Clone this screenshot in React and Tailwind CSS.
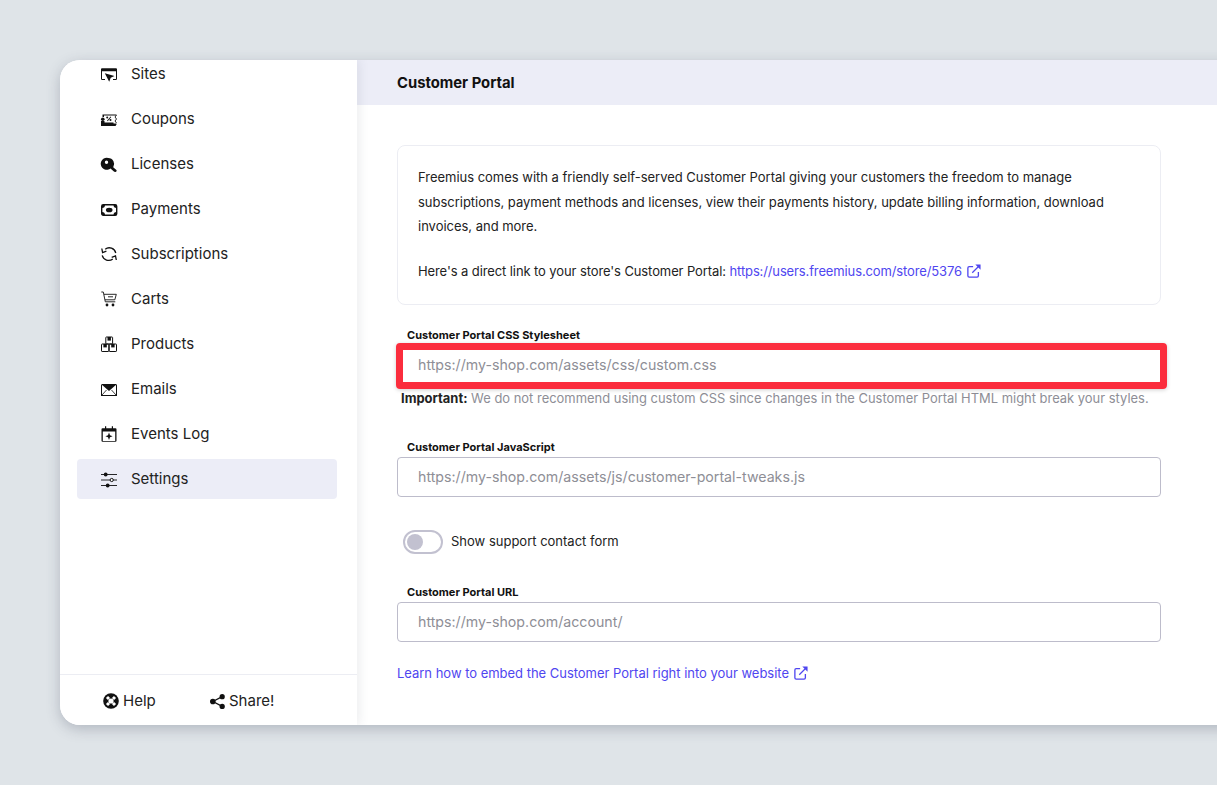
import React from "react";

const I = ({ children, vb = "0 0 16 16" }) => (
  <svg viewBox={vb} className="w-4 h-4 shrink-0 overflow-visible" fill="#111">{children}</svg>
);

const icons = {
  Sites: (
    <I>
      <path fillRule="evenodd" d="M1 2.300h14a1 1 0 0 1 1 1v9.500a1.200 1.200 0 0 1-1.200 1.200H12v-1h2.800a.2.200 0 0 0 .2-.2V5.200H1v7.600c0 .1.100.2.200.2H4v1H1.200A1.200 1.200 0 0 1 0 12.800V3.300a1 1 0 0 1 1-1z" />
      <path d="M3.800 7.300l9.700 2.800-3.800 1.700-1.500 3.900z" />
    </I>
  ),
  Coupons: (
    <I>
      <path d="M1.500 3.500h14v1H3v1.500H1.500zM0 11.500h12.500v1h3v1l-1 1.500H0z" />
      <circle cx="1.800" cy="8.300" r="1.800" />
      <path d="M0 10h3.500v2H0z" />
      <path d="M6 9.800l3.600-4.300.7.500-3.600 4.300zM6.200 5.500a1 1 0 1 1 0 2 1 1 0 0 1 0-2zM9.500 8a1 1 0 1 1 0 2 1 1 0 0 1 0-2z" />
      <path d="M15.500 4l-1.500 2 1.500 2-1.500 2 1.500 2" fill="none" stroke="#111" strokeWidth=".9" />
    </I>
  ),
  Licenses: (
    <I>
      <path fillRule="evenodd" d="M7.200 2a6 6 0 0 1 5 9.300l3.500 2.900-.6 1.800-1.900-.2-3.700-3.300A6 6 0 1 1 7.200 2zM5.500 4.600a1.700 1.700 0 1 0 0 3.400 1.700 1.700 0 0 0 0-3.400z" />
    </I>
  ),
  Payments: (
    <I>
      <rect x=".7" y="3.700" width="15" height="10.600" rx="1.500" fill="none" stroke="#111" strokeWidth="1.400" />
      <path d="M1 4h3a3 3 0 0 1-3 3zM15.500 4h-3a3 3 0 0 0 3 3zM1 14h3a3 3 0 0 0-3-3zM15.500 14h-3a3 3 0 0 1 3-3z" />
      <ellipse cx="8.200" cy="9" rx="3.300" ry="2.300" />
    </I>
  ),
  Subscriptions: (
    <I>
      <g fill="none" stroke="#111" strokeWidth="1.300">
        <path d="M14.800 7A6.700 6.700 0 0 0 4.200 3.200" />
        <path d="M1.200 9.300a6.700 6.700 0 0 0 10.600 3.700" />
        <path d="M.8 2.500l.8 4.200 3.800-1.500" />
        <path d="M15.300 14l-.8-4.200-3.800 1.500" />
      </g>
    </I>
  ),
  Carts: (
    <I>
      <g fill="none" stroke="#111" strokeWidth=".9">
        <path d="M.3 1h2l2 9.800h10" />
        <path d="M3 3.300h12.300l-1.500 5.500H4" />
        <path d="M7 5.800h5" />
      </g>
      <circle cx="6" cy="14" r="1.400" />
      <circle cx="12" cy="14" r="1.400" />
    </I>
  ),
  Products: (
    <I>
      <g fill="none" stroke="#111" strokeWidth="1">
        <rect x="4.800" y="1" width="6.800" height="7" rx=".6" />
        <rect x=".5" y="8" width="7.300" height="7.500" rx=".6" />
        <rect x="8.200" y="8" width="7.300" height="7.500" rx=".6" />
      </g>
      <rect x="6.500" y="1" width="3.400" height="3.600" />
      <rect x="2.400" y="8" width="3.400" height="3.400" />
      <rect x="10.200" y="8" width="3.400" height="3.400" />
    </I>
  ),
  Emails: (
    <I>
      <path d="M0 3h16L8 10z" />
      <path d="M0 3.500l1 .8v9.700h14V4.300l1-.8V15H0z" />
      <path d="M1 14l4.500-5M15 14l-4.500-5" stroke="#111" strokeWidth=".8" />
    </I>
  ),
  "Events Log": (
    <I>
      <path fillRule="evenodd" d="M4 .3h1.200v2h5.600v-2H12v2h2.500a1 1 0 0 1 1 1v11.400a1 1 0 0 1-1 1h-13a1 1 0 0 1-1-1V3.300a1 1 0 0 1 1-1H4zM1.800 5.500v9.500h12.400V5.500z" />
      <path d="M8 6.500l1 2.700 2.600 1-2.600 1-1 2.700-1-2.700-2.600-1 2.600-1z" />
    </I>
  ),
  Settings: (
    <I>
      <g stroke="#111" strokeWidth=".9" fill="none">
        <path d="M0 3.500h16M0 9h16M0 14.500h16" />
      </g>
      <circle cx="4.700" cy="3.500" r="1.900" />
      <circle cx="10.700" cy="9" r="1.600" fill="#fff" stroke="#111" />
      <circle cx="6.700" cy="14.500" r="1.900" />
    </I>
  ),
};

const items = ["Sites", "Coupons", "Licenses", "Payments", "Subscriptions", "Carts", "Products", "Emails", "Events Log", "Settings"];

const External = () => (
  <svg viewBox="0 0 16 16" className="w-[14px] h-[14px] inline-block" fill="none" stroke="#4f46f0" strokeWidth="1.500">
    <path d="M7 3H2.500A1.500 1.500 0 0 0 1 4.500v9A1.500 1.500 0 0 0 2.500 15h9a1.500 1.500 0 0 0 1.500-1.500V9" />
    <path d="M6 10L14 2" />
    <path d="M9.500 .5h6v6z" fill="#4f46f0" stroke="none" />
  </svg>
);

const Field = ({ label, placeholder, className = "" }) => (
  <div className={className}>
    <label className="block pl-[10px] text-[11px] leading-[14px] font-bold text-[#111] mb-[3px]">{label}</label>
    <input readOnly placeholder={placeholder} className="block w-[764px] h-10 rounded border border-[#bdbccb] bg-white pl-[20px] pb-[2px] text-[14.2px] outline-none placeholder:text-[#8e8e96]" />
  </div>
);

export default function App() {
  return (
    <div className="h-[785px] w-[1217px] overflow-hidden bg-[#dfe4e8] pt-[60px] pl-[60px] font-['Inter',sans-serif]">
      <div className="flex h-[665px] w-[1180px] overflow-hidden rounded-l-[20px] bg-white shadow-[0_4px_14px_rgba(60,70,90,0.28)]">
        <aside className="relative z-10 flex w-[297px] shrink-0 flex-col bg-white shadow-[2px_0_10px_rgba(60,70,90,0.1)]">
          <nav className="flex-1 overflow-hidden pl-[17px] pr-5">
            <ul className="-mt-[6px] flex flex-col gap-[5px]">
              {items.map((t) => (
                <li key={t} className={`flex h-10 items-center gap-[14px] rounded-sm pl-[24px] text-[15px] text-[#222] ${t === "Settings" ? "bg-[#ecedf7]" : ""}`}>
                  {icons[t]}
                  <span>{t}</span>
                </li>
              ))}
            </ul>
          </nav>
          <div className="flex h-[51px] items-center border-t border-[#ecedf3] pl-[43px] pt-[2px] text-[15px] text-[#222]">
            <span className="flex w-[107px] items-center gap-[4px]">
              <svg viewBox="0 0 16 16" className="h-4 w-4" fill="#111">
                <circle cx="8" cy="8" r="7.800" />
                <circle cx="8" cy="8" r="2.600" fill="#fff" />
                <path d="M4 4L6 6M12 4L10 6M4 12L6 10M12 12L10 10" stroke="#fff" strokeWidth="3" />
              </svg>
              Help
            </span>
            <span className="flex items-center gap-[4px]">
              <svg viewBox="0 0 16 16" className="h-[15px] w-[15px]" fill="#111">
                <circle cx="3" cy="8" r="3" />
                <circle cx="13" cy="2.800" r="2.800" />
                <circle cx="13" cy="13.200" r="2.800" />
                <path d="M3 8l10-5.200M3 8l10 5.200" stroke="#111" strokeWidth="1.400" />
              </svg>
              Share!
            </span>
          </div>
        </aside>
        <main className="min-w-0 flex-1">
          <header className="flex h-[45px] items-center bg-[#ecedf7] pl-10 pt-[2px] text-[14.8px] font-bold text-[#111]">Customer Portal</header>
          <div className="pl-10 pt-10">
            <section className="h-[160px] w-[764px] rounded-lg border border-[#ecedf3] px-5 pt-[19px] text-[13px] leading-[24.5px] text-[#222]">
              <p className="tracking-[-0.02px]">Freemius comes with a friendly self-served Customer Portal giving your customers the freedom to manage subscriptions, payment methods and licenses, view their payments history, update billing information, download invoices, and more.</p>
              <p className="mt-5 flex items-center">
                <span className="tracking-[-0.1px]">Here's a direct link to your store's Customer Portal:</span>&nbsp;
                <a className="text-[#4f46f0] tracking-[-0.13px]">https://users.freemius.com/store/5376</a>
                <span className="ml-[5px] flex"><External /></span>
              </p>
            </section>
            <div className="relative mt-[23px]">
              <Field label="Customer Portal CSS Stylesheet" placeholder="https://my-shop.com/assets/css/custom.css" />
              <div className="absolute left-[-1px] top-[15px] h-[46px] w-[771px] rounded-[4px] border-[7px] border-[#fb2d3d] shadow-[0_1px_4px_rgba(0,0,0,0.18)]" />
            </div>
            <p className="mt-[5px] pl-1 text-[12.95px] leading-4 text-[#8e8e96]">
              <b className="font-bold text-[#222]">Important:</b> We do not recommend using custom CSS since changes in the Customer Portal HTML might break your styles.
            </p>
            <Field className="mt-[34px]" label="Customer Portal JavaScript" placeholder="https://my-shop.com/assets/js/customer-portal-tweaks.js" />
            <div className="mt-[33px] flex items-center pl-[6px]">
              <span className="flex h-6 w-10 items-center rounded-full border-2 border-[#c2c1d0] bg-white pl-[2px]">
                <span className="h-4 w-4 rounded-full bg-[#c2c1d0]" />
              </span>
              <span className="ml-2 text-[13px] text-[#222]">Show support contact form</span>
            </div>
            <Field className="mt-[31px]" label="Customer Portal URL" placeholder="https://my-shop.com/account/" />
            <p className="mt-[23px] flex items-center text-[13px] leading-4 tracking-[-0.02px] text-[#4f46f0]">
              Learn how to embed the Customer Portal right into your website
              <span className="ml-[5px] flex"><External /></span>
            </p>
          </div>
        </main>
      </div>
    </div>
  );
}
